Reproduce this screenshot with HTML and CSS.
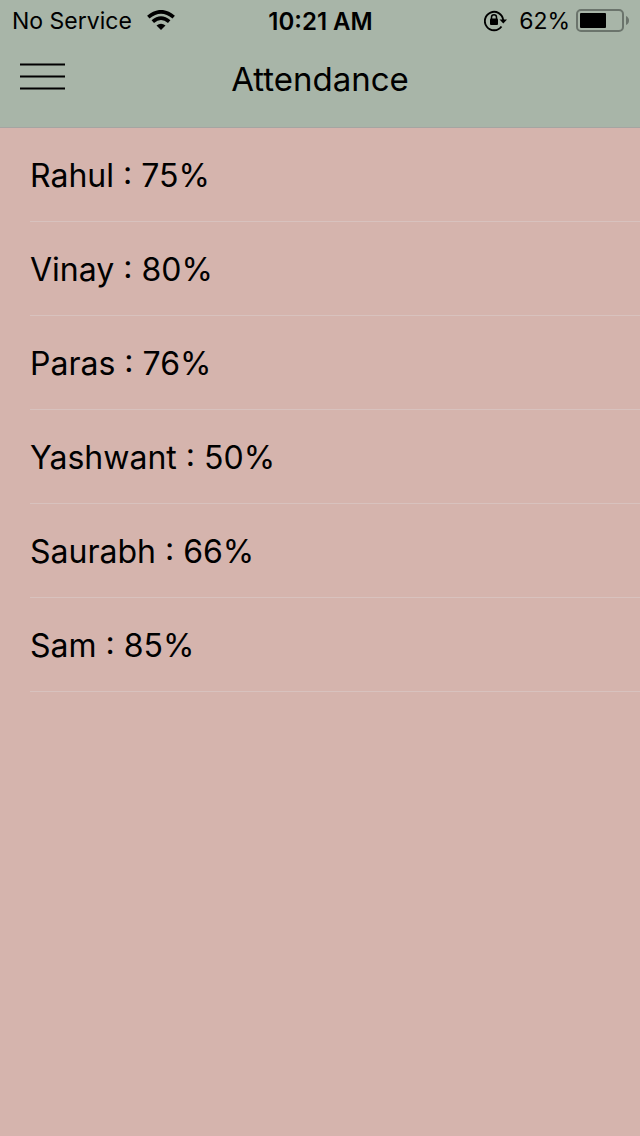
FILE: index.html
```html
<!DOCTYPE html>
<html lang="en">
<head>
<meta charset="utf-8">
<meta name="viewport" content="width=device-width, initial-scale=1">
<title>Attendance</title>
<link rel="stylesheet" href="styles.css">
</head>
<body>
<header class="header">
  <div class="status">
    <div class="status-left">
      <span>No Service</span>
      <svg class="wifi" width="28" height="22" viewBox="0 0 28 22" aria-hidden="true">
        <path d="M14 20L9.500 15.500Q14 12 18.500 15.500Z"/>
        <path d="M1.300 7.200Q14-3.600 26.700 7.200M5.800 11.700Q14 4.600 22.200 11.700" fill="none" stroke="#000" stroke-width="3.700"/>
      </svg>
    </div>
    <div class="time">10:21 AM</div>
    <div class="status-right">
      <svg class="lock" width="23" height="22" viewBox="0 0 23 22" aria-hidden="true">
        <path d="M17.500 16.500A9.200 9.200 0 1 1 19.200 10" fill="none" stroke="#000" stroke-width="1.900"/>
        <path d="M15.500 9.500H23L19.300 13.500Z"/>
        <rect x="6" y="8.500" width="8" height="6.500" rx="1"/>
        <path d="M7.500 9.500V7.300a2.500 2.500 0 0 1 5 0V9.500" fill="none" stroke="#000" stroke-width="1.500"/>
      </svg>
      <span>62%</span>
      <svg class="battery" width="53" height="24" viewBox="0 0 53 24" aria-hidden="true">
        <rect x="1" y="1" width="46" height="21" rx="4" fill="none" stroke="#6b746c" stroke-width="2"/>
        <rect x="4" y="4" width="26" height="15" rx="1"/>
        <path d="M50 7q3 1.500 3 4.500t-3 4.500z" fill="#6b746c"/>
      </svg>
    </div>
  </div>
  <nav class="navbar">
    <button class="menu" type="button" aria-label="Menu">
      <svg width="45" height="32" viewBox="0 0 45 32" aria-hidden="true"><path d="M0 1.500H45M0 13.500H45M0 25.500H45" stroke="#000" stroke-width="2"/></svg>
    </button>
    <h1 class="title">Attendance</h1>
  </nav>
</header>
<main>
  <ul class="list">
    <li class="row">Rahul : 75%</li>
    <li class="row">Vinay : 80%</li>
    <li class="row">Paras : 76%</li>
    <li class="row">Yashwant : 50%</li>
    <li class="row">Saurabh : 66%</li>
    <li class="row">Sam : 85%</li>
  </ul>
</main>
</body>
</html>
```
FILE: styles.css
```css
* { box-sizing: border-box; }
body {
  margin: 0;
  min-height: 100vh;
  background: #d5b4ad;
  color: #000;
  font-family: Inter, "Liberation Sans", sans-serif;
}
.header {
  background: #a8b5a8;
  border-bottom: 1px solid #a5a5a2;
}
.status {
  display: grid;
  grid-template-columns: 1fr auto 1fr;
  align-items: center;
  height: 41px;
  padding: 0 11px 0 12px;
  font-size: 23px;
  line-height: 41px;
}
.status-left, .status-right { display: flex; align-items: center; }
.status-left span, .status-right span { padding-top: 1px; }
.status-left { gap: 15px; }
.status-right { justify-content: flex-end; gap: 6px; }
.time { font-size: 24px; font-weight: 600; }
.lock { margin-right: 6px; }
.navbar {
  display: grid;
  grid-template-columns: 1fr auto 1fr;
  align-items: center;
  height: 86px;
  padding: 0 20px 10px;
}
.menu {
  justify-self: start;
  display: flex;
  padding: 0;
  border: 0;
  background: none;
}
.title {
  margin: 0;
  font-size: 33px;
  font-weight: 400;
  line-height: 44px;
}
.list { margin: 0; padding: 0 0 0 30px; list-style: none; }
.row {
  padding-top: 3px;
  border-bottom: 1px solid #d8c2be;
  font-size: 32px;
  line-height: 90px;
}
```
